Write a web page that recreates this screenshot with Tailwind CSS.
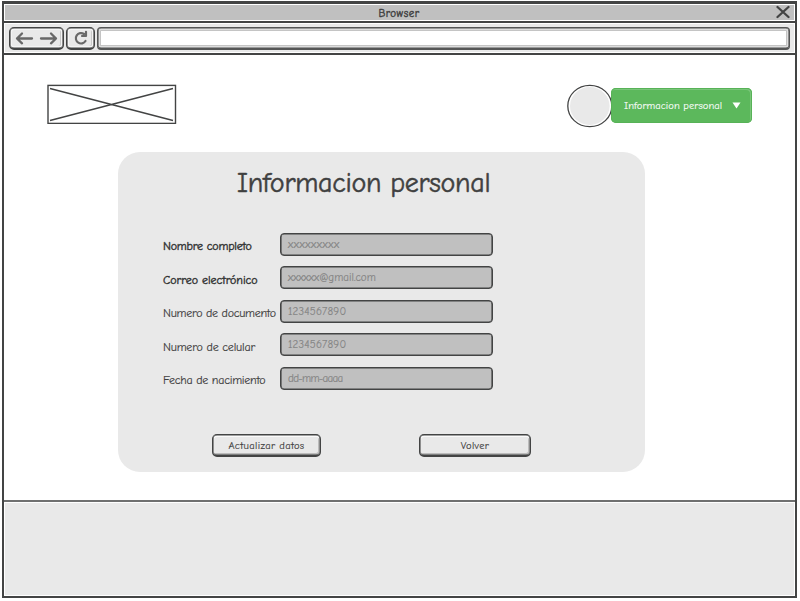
<!DOCTYPE html>
<html lang="es">
<head>
<meta charset="utf-8">
<title>Informacion personal</title>
<script src="https://cdn.jsdelivr.net/npm/@tailwindcss/browser@4"></script>
</head>
<body class="bg-white overflow-hidden text-[#3f4040] font-['Comic_Sans_MS','Comic_Neue',Inter,sans-serif] whitespace-nowrap [-webkit-text-stroke:0.15px_currentColor]">
<div class="w-[800px] h-[601px] pl-[2px] pt-px">
<div class="w-[795px] h-[597px] flex flex-col border-2 border-t-3 border-[#434444]">
  <header class="h-[17px] shrink-0 border border-white bg-[#c0c0c0] flex items-center relative justify-center">
    <span class="text-[11px] leading-none tracking-[0.5px] -ml-[1px] mt-[1px] [-webkit-text-stroke:0.4px_currentColor]">Browser</span>
    <svg class="absolute right-[4px] top-0" width="14" height="14" viewBox="0 0 14 14" fill="none" stroke="#434444" stroke-width="2.3" stroke-linecap="round"><path d="M1.5 2 12.5 12M12.5 2 1.5 12"/></svg>
  </header>
  <nav class="h-[34px] shrink-0 border-y-2 border-[#434444] bg-[#e9e9e9] shadow-[inset_0_0_0_1px_#fff] flex items-center gap-[2px] pl-[5px] pr-[5px]">
    <div class="w-[55px] h-[23px] rounded-[5px] border border-b-2 border-[#434444] bg-[#e9e9e9] shadow-[inset_0_0_0_0.6px_#434444,inset_0_0_0_2px_#f4f4f4,inset_-2px_-1px_0_1px_#c9c9c9] flex items-center justify-center">
      <svg width="45" height="14" viewBox="0 0 45 14" fill="none" stroke="#686868" stroke-width="2.3" stroke-linecap="round" stroke-linejoin="round"><path d="M18 7.500H3M8 2.500 3 7.500l5 4.800M27 7.500h15M37 2.500 42 7.500l-5 4.800"/></svg>
    </div>
    <div class="w-[29px] h-[23px] rounded-[5px] border border-b-2 border-[#434444] bg-[#e9e9e9] shadow-[inset_0_0_0_0.6px_#434444,inset_0_0_0_2px_#f4f4f4,inset_-2px_-1px_0_1px_#c9c9c9] flex items-center justify-center">
      <svg width="16" height="16" viewBox="0 0 16 16" fill="none" stroke="#686868" stroke-width="2.200" stroke-linecap="round" stroke-linejoin="round"><path d="M12.500 11A5.200 5.200 0 1 1 11 4M13 1.800V6H9"/></svg>
    </div>
    <div class="flex-1 h-[23px] rounded-[4px] border border-b-2 border-[#555656] bg-white shadow-[inset_0_0_0_0.6px_#555656,inset_0_0_0_2px_#dedede,inset_0_0_0_3px_#c4c4c4]"></div>
  </nav>
  <main class="h-[445px] shrink-0 bg-white">
    <div class="flex items-center pt-[26px] pl-[43px]">
      <svg width="130" height="40" viewBox="0 0 130 40" fill="none" stroke="#434444" stroke-width="1.400"><rect x="1" y="1.400" width="127.500" height="38"/><path d="M3 4.500 126 36.500M3 36.500 126 4.500"/></svg>
      <svg class="ml-[390px] mt-[4px] -mb-[2px] overflow-visible" width="46" height="44" viewBox="0 0 46 44"><ellipse cx="22.800" cy="21" rx="22" ry="20.700" fill="#fff" stroke="#434444" stroke-width="1.300"/><ellipse cx="22.800" cy="21" rx="19.800" ry="18.900" fill="#e9e9e9"/></svg>
      <div class="-ml-[2px] mt-[2px] w-[141px] h-[35px] rounded-[5px] bg-[#5cb85c] shadow-[inset_0_0_0_1px_#57b257,inset_-1px_1px_0_1px_#79c579] flex items-center justify-between pl-[13px] pr-[11px] text-white">
        <span class="text-[10.5px] tracking-[0.04px] pt-[3px] [-webkit-text-stroke:0.1px_currentColor]">Informacion personal</span>
        <svg width="9" height="7" viewBox="0 0 9 7" fill="#fff"><path d="M.5.500h8L4.500 6.500z"/></svg>
      </div>
    </div>
    <section class="ml-[114px] mt-[24.500px] w-[527px] h-[320.500px] rounded-[22px] bg-[#e9e9e9] pt-[15.500px]">
      <h1 class="ml-[119px] text-[28px] leading-[32px] tracking-[-0.3px] [-webkit-text-stroke:0.5px_currentColor]">Informacion personal</h1>
      <div class="ml-[45px] mt-[34px] flex flex-col gap-[10.400px] text-[12px]">
        <div class="flex items-center h-[23px]"><label class="w-[117px] pt-[3px] text-[#333434] tracking-[-0.2px] [-webkit-text-stroke:0.4px_currentColor]">Nombre completo</label><div class="w-[213px] h-[23px] rounded-[4px] border border-[#434444] bg-[#c0c0c0] shadow-[inset_0_0_0_0.6px_#434444] flex items-center pl-[7px] pt-[2px] text-[11px] text-[#858585] tracking-[0.55px]">xxxxxxxxx</div></div>
        <div class="flex items-center h-[23px]"><label class="w-[117px] pt-[4px] text-[#333434] tracking-[-0.05px] [-webkit-text-stroke:0.4px_currentColor]">Correo electrónico</label><div class="w-[213px] h-[23px] rounded-[4px] border border-[#434444] bg-[#c0c0c0] shadow-[inset_0_0_0_0.6px_#434444] flex items-center pl-[7px] pt-px text-[11px] text-[#858585]">xxxxxx@gmail.com</div></div>
        <div class="flex items-center h-[23px]"><label class="w-[117px] pt-[3px] tracking-[-0.27px]">Numero de documento</label><div class="w-[213px] h-[23px] rounded-[4px] border border-[#434444] bg-[#c0c0c0] shadow-[inset_0_0_0_0.6px_#434444] flex items-center pl-[7px] pt-px text-[11px] text-[#858585] tracking-[0.2px]">1234567890</div></div>
        <div class="flex items-center h-[23px]"><label class="w-[117px] pt-[4px] tracking-[-0.2px]">Numero de celular</label><div class="w-[213px] h-[23px] rounded-[4px] border border-[#434444] bg-[#c0c0c0] shadow-[inset_0_0_0_0.6px_#434444] flex items-center pl-[7px] pt-[2px] text-[11px] text-[#858585] tracking-[0.2px]">1234567890</div></div>
        <div class="flex items-center h-[23px]"><label class="w-[117px] pt-[3px] tracking-[-0.25px]">Fecha de nacimiento</label><div class="w-[213px] h-[23px] rounded-[4px] border border-[#434444] bg-[#c0c0c0] shadow-[inset_0_0_0_0.6px_#434444] flex items-center pl-[7px] pt-[2px] text-[11px] text-[#858585] tracking-[-0.7px]">dd-mm-aaaa</div></div>
      </div>
      <div class="flex ml-[94px] mt-[44px] gap-[98px] text-[10.5px] tracking-[0.35px]">
        <button class="w-[109px] h-[23px] pt-[2px] leading-[16px] rounded-[5px] border border-b-2 border-[#434444] shadow-[inset_0_0_0_0.6px_#434444,inset_0_1px_0_1px_#fafafa,inset_-1px_-1px_0_1px_#bcbcbc]">Actualizar datos</button>
        <button class="w-[112px] h-[23px] pt-[2px] leading-[16px] rounded-[5px] border border-b-2 border-[#434444] shadow-[inset_0_0_0_0.6px_#434444,inset_0_1px_0_1px_#fafafa,inset_-1px_-1px_0_1px_#bcbcbc]">Volver</button>
      </div>
    </section>
  </main>
  <footer class="flex-1 border-t-2 border-[#6f7070] bg-[#e9e9e9] shadow-[inset_0_0_0_1px_#fff]"></footer>
</div>
</div>
</body>
</html>
